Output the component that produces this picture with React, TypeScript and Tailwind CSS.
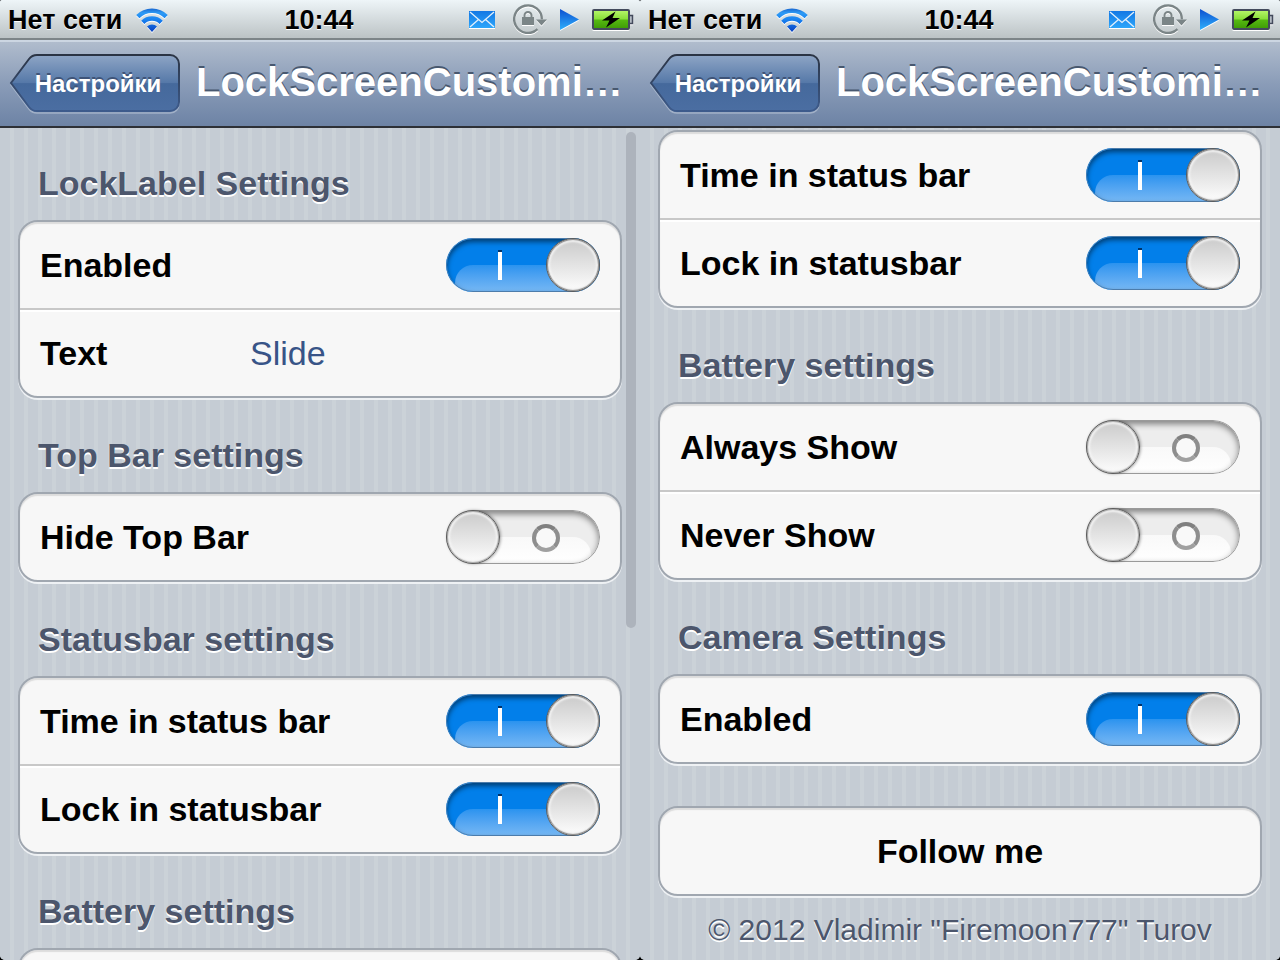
import { useId, useState } from "react";

type Row = { label: string; on?: boolean; value?: string };

type Group = { title?: string; rows: Row[] };

const statusbarRows: Row[] = [
  { label: "Time in status bar", on: true },
  { label: "Lock in statusbar", on: true },
];

const topGroups: Group[] = [
  { title: "LockLabel Settings", rows: [{ label: "Enabled", on: true }, { label: "Text", value: "Slide" }] },
  { title: "Top Bar settings", rows: [{ label: "Hide Top Bar", on: false }] },
  { title: "Statusbar settings", rows: statusbarRows },
  // only the top edge of this one is above the fold
  { title: "Battery settings", rows: [] },
];

const bottomGroups: Group[] = [
  { rows: statusbarRows },
  { title: "Battery settings", rows: [{ label: "Always Show", on: false }, { label: "Never Show", on: false }] },
  { title: "Camera Settings", rows: [{ label: "Enabled", on: true }] },
];

function WifiIcon() {
  const id = useId();
  return (
    <svg viewBox="0 0 32 26" className="h-[26px] w-8 drop-shadow-[0_1px_0_#fff]" aria-hidden="true">
      <defs>
        <linearGradient id={id} x1="0" y1="0" x2="0" y2="24" gradientUnits="userSpaceOnUse">
          <stop offset="0" stopColor="#1055c4" />
          <stop offset="0.25" stopColor="#2e9bf5" />
          <stop offset="0.55" stopColor="#1780f0" />
          <stop offset="1" stopColor="#0b46c4" />
        </linearGradient>
      </defs>
      <g fill="none" stroke={`url(#${id})`} strokeWidth="4.500">
        <path d="M1.800 9.700a20 20 0 0 1 28.400 0" />
        <path d="M6.800 15.300a13 13 0 0 1 18.400 0" />
      </g>
      <path d="M16 25l-5-5.500a7 7 0 0 1 10 0z" fill={`url(#${id})`} />
    </svg>
  );
}

function MailIcon() {
  const id = useId();
  return (
    <svg viewBox="0 0 26 17" className="h-[17px] w-[26px] drop-shadow-[0_1px_0_#fff]" aria-hidden="true">
      <defs>
        <linearGradient id={id} x1="0" y1="0" x2="0" y2="1">
          <stop offset="0" stopColor="#1478e4" />
          <stop offset="1" stopColor="#2ca6fb" />
        </linearGradient>
      </defs>
      <rect width="26" height="17" fill={`url(#${id})`} />
      <path d="M1 1L13 11.500 25 1M1 16l8.500-7.500M25 16l-8.500-7.500" fill="none" stroke="#e3f0fb" strokeWidth="1.300" />
    </svg>
  );
}

function RotationLockIcon() {
  return (
    <svg viewBox="0 0 34 30" className="h-[30px] w-[34px] drop-shadow-[0_1px_0_#fff]" aria-hidden="true">
      <path d="M24.500 25.200A13.800 13.800 0 1 1 28.800 15.500" fill="none" stroke="#7b8587" strokeWidth="2.400" />
      <path d="M23 15.500h11l-5.500 6z" fill="#7b8587" />
      <path d="M11.500 14v-2.500a3.500 3.500 0 0 1 7 0V14" fill="none" stroke="#7b8587" strokeWidth="2" />
      <rect x="9" y="13" width="12" height="8" fill="#7b8587" />
    </svg>
  );
}

function PlayIcon() {
  const id = useId();
  return (
    <svg viewBox="0 0 19 21" className="h-[21px] w-[19px] drop-shadow-[0_1px_0_#fff]" aria-hidden="true">
      <defs>
        <linearGradient id={id} x1="0" y1="0" x2="0" y2="1">
          <stop offset="0" stopColor="#0d4fd0" />
          <stop offset="1" stopColor="#2eb0fc" />
        </linearGradient>
      </defs>
      <path d="M0 0l19 10.500L0 21z" fill={`url(#${id})`} />
    </svg>
  );
}

function BatteryIcon() {
  const id = useId();
  return (
    <svg viewBox="0 0 42 21" className="h-[21px] w-[42px] drop-shadow-[0_1px_0_#fff]" aria-hidden="true">
      <defs>
        <linearGradient id={id} x1="0" y1="0" x2="0" y2="1">
          <stop offset="0" stopColor="#b8f76c" />
          <stop offset="0.450" stopColor="#8be03c" />
          <stop offset="0.550" stopColor="#55b810" />
          <stop offset="1" stopColor="#3d9a06" />
        </linearGradient>
      </defs>
      <rect x="1" y="1" width="36" height="19" rx="1" fill={`url(#${id})`} stroke="#434a5c" strokeWidth="2" />
      <path d="M38 6.500h2.500v8H38" fill="#b5bcc4" stroke="#434a5c" strokeWidth="1.500" />
      <path d="M23.500 2.500L10 11.500h7.500L14 18.500l14-9.500h-7.500z" fill="#000" />
    </svg>
  );
}

function StatusBar() {
  return (
    <div className="grid h-10 grid-cols-[1fr_auto_1fr] items-center border-b-2 border-[#7d8588] bg-linear-to-b from-[#eef5f8] to-[#bcc3c5] pr-[6px] pl-2 text-[27px] leading-8 font-bold text-black [text-shadow:0_1px_0_#fff]">
      <div className="flex items-center gap-[14px] pt-[2px]">
        <span>Нет сети</span>
        <WifiIcon />
      </div>
      <span className="pt-[2px] pr-1">10:44</span>
      <div className="flex items-center justify-end gap-[13px]">
        <MailIcon />
        <div className="flex pl-[5px]"><RotationLockIcon /></div>
        <PlayIcon />
        <BatteryIcon />
      </div>
    </div>
  );
}

function BackButton() {
  const id = useId();
  return (
    <button type="button" className="relative h-[60px] w-[172px] shrink-0 pl-2 text-2xl font-bold text-white [text-shadow:0_-2px_0_#3f5478]">
      <svg viewBox="0 0 172 60" className="absolute inset-0 h-full w-full" aria-hidden="true">
        <defs>
          <linearGradient id={id} x1="0" y1="0" x2="0" y2="1">
            <stop offset="0" stopColor="#8ea5c5" />
            <stop offset="0.500" stopColor="#5578a8" />
            <stop offset="0.510" stopColor="#45699c" />
            <stop offset="1" stopColor="#4b6ea2" />
          </linearGradient>
          <linearGradient id={`${id}-edge`} x1="0" y1="0" x2="0" y2="1">
            <stop offset="0" stopColor="#2b3444" />
            <stop offset="1" stopColor="#3d5b8c" />
          </linearGradient>
        </defs>
        <path d="M29 3H162a9 9 0 0 1 9 9V50a9 9 0 0 1-9 9H29q-5 0-8-4L3 31 21 7q3-4 8-4z" fill="none" stroke="#b3c0d3" strokeOpacity=".7" strokeWidth="1.500" />
        <path d="M29 1H162a9 9 0 0 1 9 9V48a9 9 0 0 1-9 9H29q-5 0-8-4L3 29 21 5q3-4 8-4z" fill={`url(#${id})`} stroke={`url(#${id}-edge)`} strokeWidth="2" />
      </svg>
      <span className="relative">Настройки</span>
    </button>
  );
}

function NavBar() {
  return (
    <header className="flex h-[88px] items-center gap-4 border-t-2 border-b-2 border-t-[#ccd6e2] border-b-[#2d3036] bg-linear-to-b from-[#b0bccd] via-[#8a9cb8] to-[#6d83a5] px-2">
      <BackButton />
      <h1 className="min-w-0 flex-1 truncate pb-1 text-[40px] leading-[48px] font-bold text-white [text-shadow:0_-2px_0_#48586f]">LockScreenCustomi…</h1>
    </header>
  );
}

function OnTrack() {
  return (
    <span className="absolute inset-0 overflow-hidden rounded-full bg-[#027fea]">
      <span className="absolute top-[27px] right-0 bottom-0 left-[9px] rounded-tl-[18px] bg-linear-to-b from-[#2a93ef] to-[#76b8f4]" />
      <span className="absolute top-[14px] left-[52px] h-7 w-1 bg-white shadow-[0_-2px_0_#00336b]" />
      <span className="absolute inset-0 rounded-full border border-[#4c7cab] shadow-[inset_0_3px_5px_#00000080]" />
    </span>
  );
}

function OffTrack() {
  return (
    <span className="absolute inset-0 overflow-hidden rounded-full bg-[#ededed]">
      <span className="absolute top-[27px] right-[9px] bottom-0 left-0 rounded-tr-[18px] bg-linear-to-b from-[#f9f9f9] to-white" />
      <span className="absolute top-[14px] left-[86px] size-7 rounded-full border-4 border-t-[#808080] border-r-[#8e8e8e] border-b-[#a0a0a0] border-l-[#8e8e8e] bg-[#f9f9f9]" />
      <span className="absolute inset-0 rounded-full border border-[#9a9a9a] shadow-[inset_0_3px_6px_#00000078]" />
    </span>
  );
}

function Toggle({ id, on }: { id: string; on: boolean }) {
  const [checked, setChecked] = useState(on);
  return (
    <span className="relative flex h-[54px] w-[154px] shrink-0">
      <input id={id} type="checkbox" role="switch" checked={checked} onChange={(e) => setChecked(e.target.checked)} className="absolute inset-0 z-10 h-full w-full cursor-pointer opacity-0" />
      {checked ? <OnTrack /> : <OffTrack />}
      <span className={`relative size-[54px] rounded-full border border-[#5c5c5c] bg-linear-to-b from-[#cacaca] to-[#fdfdfd] ${checked ? "ml-auto shadow-[inset_0_0_1px_1px_#8a8a8a,inset_0_0_2px_3px_#f4f4f4]" : "shadow-[1px_0_3px_#00000055,inset_0_0_1px_1px_#aaa,inset_0_0_2px_3px_#f4f4f4]"}`} />
    </span>
  );
}

function SettingRow({ label, on, value }: Row) {
  const id = useId();
  return (
    <div className="flex h-[88px] items-center border-t-2 border-[#c8c8c8] px-5 shadow-[inset_0_2px_0_#fff] first:h-[86px] first:border-t-0 first:shadow-none">
      <label htmlFor={id} className="w-[210px] shrink-0 text-[34px] leading-10 font-bold whitespace-nowrap text-black">{label}</label>
      {value !== undefined ? (
        <input id={id} type="text" defaultValue={value} className="min-w-0 flex-1 bg-transparent text-[34px] leading-10 text-[#385487] outline-none" />
      ) : (
        <span className="flex flex-1 justify-end"><Toggle id={id} on={!!on} /></span>
      )}
    </div>
  );
}

const cardClass = "min-h-[90px] rounded-[20px] border-2 border-[#a0a7b0] bg-[#f7f7f7] shadow-[0_2px_0_#eef1f4,inset_0_2px_1px_#dcdcdc]";

function SettingGroup({ title, rows }: Group) {
  return (
    <section>
      {title ? <h2 className="flex h-[94px] items-center pt-5 pl-5 text-[34px] leading-10 font-bold text-[#4c566c] [text-shadow:0_2px_0_#fff]">{title}</h2> : null}
      <div className={cardClass}>
        {rows.map((row) => <SettingRow key={row.label} {...row} />)}
      </div>
    </section>
  );
}

function Phone({ children }: { children: React.ReactNode }) {
  return (
    <div className="flex min-w-0 flex-col overflow-hidden rounded-t-[2px] rounded-b-[5px] bg-[#c5ccd4]">
      <StatusBar />
      <NavBar />
      <div className="relative min-h-0 flex-1 overflow-hidden bg-[repeating-linear-gradient(90deg,#c5ccd4_0px,#c5ccd4_10px,#cbd2d8_10px,#cbd2d8_14px)] px-[18px]">
        {children}
      </div>
    </div>
  );
}

export default function App() {
  return (
    <main className="grid h-screen grid-cols-2 overflow-hidden bg-black font-['Liberation_Sans',Arial,sans-serif]">
      <Phone>
        <div className="-mt-[2px]">
          {topGroups.map((group) => <SettingGroup key={group.title} {...group} />)}
        </div>
        <span className="absolute top-1 right-1 h-[496px] w-[10px] rounded-full bg-[#adb3bc]" />
      </Phone>
      <Phone>
        <div className="pt-[2px]">
          {bottomGroups.map((group, i) => <SettingGroup key={i} {...group} />)}
          <button type="button" className={`${cardClass} mt-[42px] w-full text-[34px] font-bold text-black`}>Follow me</button>
          <p className="pt-4 text-center text-[30px] leading-9 text-[#4c566c] [text-shadow:0_2px_0_#fff]">© 2012 Vladimir "Firemoon777" Turov</p>
        </div>
      </Phone>
    </main>
  );
}
